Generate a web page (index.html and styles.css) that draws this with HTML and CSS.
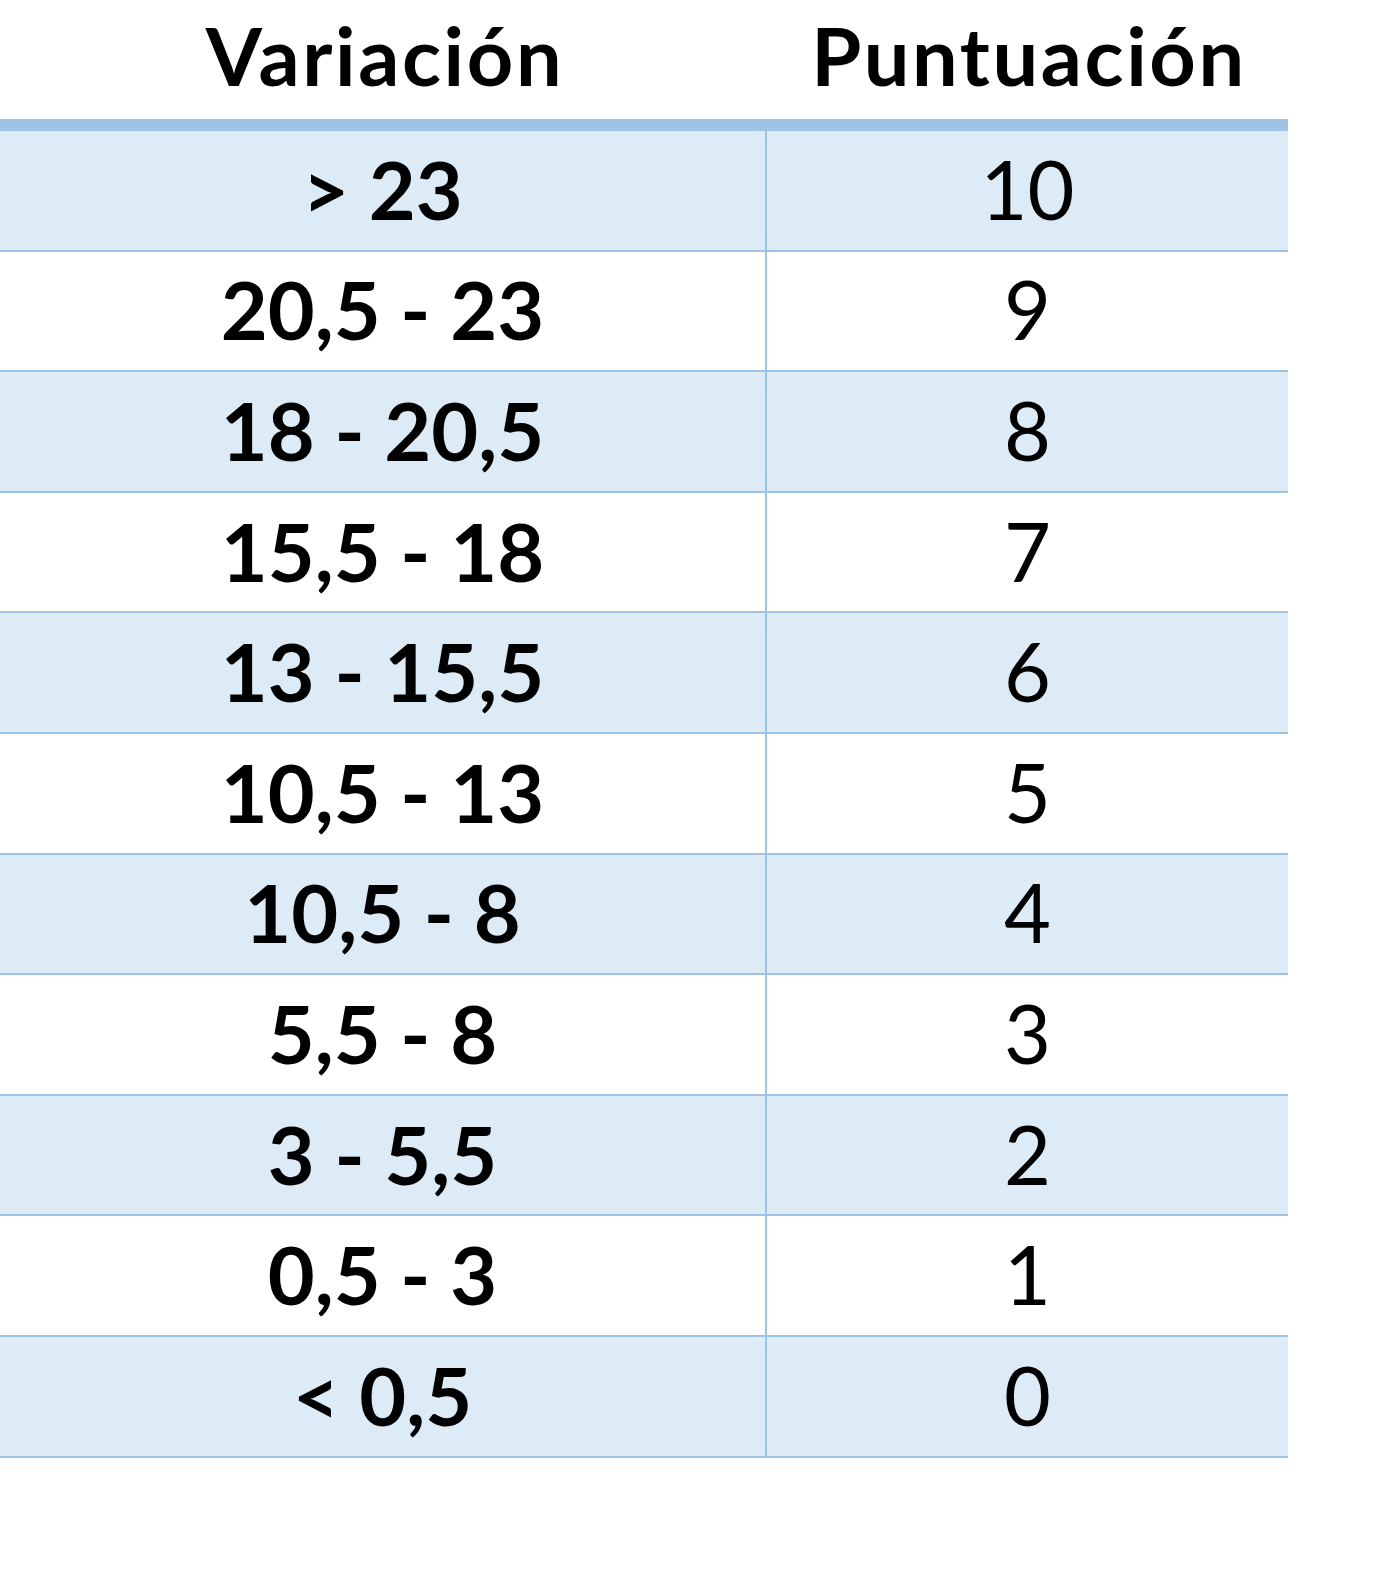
FILE: index.html
```html
<!DOCTYPE html>
<html lang="es">
<head>
  <meta charset="UTF-8">
  <title>Variación / Puntuación</title>
  <link rel="stylesheet" href="styles.css">
</head>
<body>
  <div id="scoreTable">
    <div class="head">
      <div class="headCell">Variación</div>
      <div class="headCell">Puntuación</div>
    </div>
    <div class="row band">
      <div class="rangeCell">&gt; 23</div>
      <div class="pointCell">10</div>
    </div>
    <div class="row">
      <div class="rangeCell">20,5 - 23</div>
      <div class="pointCell">9</div>
    </div>
    <div class="row band">
      <div class="rangeCell">18 - 20,5</div>
      <div class="pointCell">8</div>
    </div>
    <div class="row">
      <div class="rangeCell">15,5 - 18</div>
      <div class="pointCell">7</div>
    </div>
    <div class="row band">
      <div class="rangeCell">13 - 15,5</div>
      <div class="pointCell">6</div>
    </div>
    <div class="row">
      <div class="rangeCell">10,5 - 13</div>
      <div class="pointCell">5</div>
    </div>
    <div class="row band">
      <div class="rangeCell">10,5 - 8</div>
      <div class="pointCell">4</div>
    </div>
    <div class="row">
      <div class="rangeCell">5,5 - 8</div>
      <div class="pointCell">3</div>
    </div>
    <div class="row band">
      <div class="rangeCell">3 - 5,5</div>
      <div class="pointCell">2</div>
    </div>
    <div class="row">
      <div class="rangeCell">0,5 - 3</div>
      <div class="pointCell">1</div>
    </div>
    <div class="row band">
      <div class="rangeCell">&lt; 0,5</div>
      <div class="pointCell">0</div>
    </div>
  </div>
</body>
</html>
```
FILE: styles.css
```css
body {
  margin: 0;
  background: #fff;
  color: #000;
  font-family: Lato, "Open Sans", sans-serif;
}
#scoreTable {
  width: 1288px;
}
.head {
  display: grid;
  grid-template-columns: 767px 521px;
  height: 131px;
  box-sizing: border-box;
  border-bottom: 12px solid #9dc3e6;
}
.headCell {
  text-align: center;
  font-size: 81px;
  font-weight: bold;
  line-height: 1;
  letter-spacing: 2.6px;
  padding-top: 14px;
  padding-left: 3px;
}
.row {
  display: grid;
  grid-template-columns: 767px 521px;
  height: 120.6px;
  box-sizing: border-box;
  border-bottom: 2px solid #9dc3e6;
}
.band {
  background: #ddebf7;
}
.rangeCell, .pointCell {
  display: flex;
  align-items: center;
  justify-content: center;
  font-size: 81px;
  line-height: 1;
  padding-bottom: 4px;
}
.rangeCell {
  border-right: 2px solid #9dc3e6;
  font-weight: bold;
}
```
